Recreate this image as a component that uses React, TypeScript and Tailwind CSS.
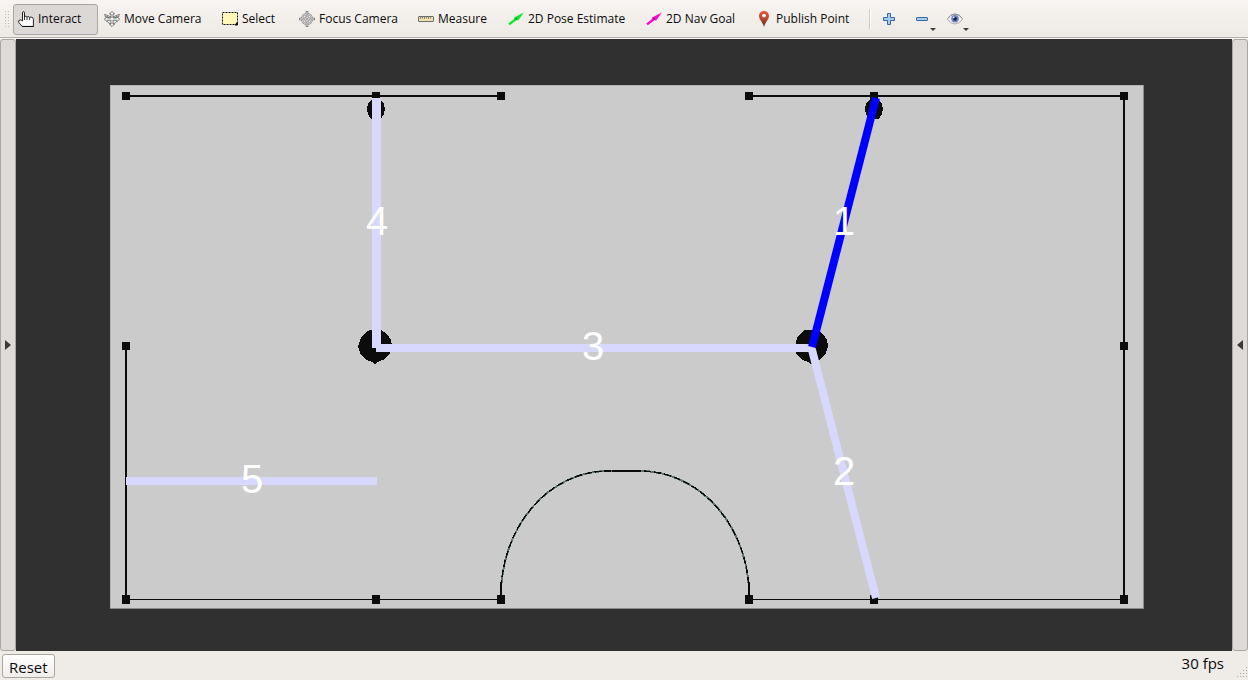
import { useState } from 'react';
import type { ReactNode } from 'react';

function HandIcon() {
  return (
    <svg width="16" height="16" viewBox="0 0 16 16" aria-hidden="true">
      <path
        d="M4.5 10V1.8Q4.5.6 5.5.6T6.5 1.8V6.2Q6.7 5.2 7.7 5.2T9 6.4Q9.2 5.5 10.2 5.5T11.6 6.8Q11.8 6 12.6 6Q15.4 6 15.4 8.4V15.4H4.2L.6 11.2Q.3 9.2 2 8.9Q3.2 8.8 4.5 10Z"
        fill="#fff" stroke="#222" strokeWidth="1"
      />
      <path d="M6.5 6v3M9 6.5v2.500M11.6 6.8v2.200" stroke="#333" fill="none" />
      <path d="M4.2 15.5h11.4" stroke="#111" />
    </svg>
  );
}

function MoveIcon() {
  return (
    <svg width="16" height="16" viewBox="0 0 16 16" aria-hidden="true">
      <g fill="#f4f4f0" stroke="#5c5c5c" strokeWidth="0.8" strokeLinejoin="round">
        <path d="M.6 3.400 3 4.200Q8 7.600 13 4.200L15.400 3.400 14.400 6.400 13.400 5.600Q8 9 2.600 5.600L1.600 6.400Z" />
        <path d="M8 .4 10.600 3H9V7H12.600V5.600L15.700 8.200 12.600 10.800V9.200H9V13H10.600L8 15.600 5.400 13H7V9.200H3.400V10.800L.3 8.200 3.400 5.600V7H7V3H5.400Z" />
        <path d="M3.600 10.800Q5 12.600 7 12.800M12.400 10.800Q11 12.600 9 12.800" fill="none" />
      </g>
    </svg>
  );
}

function SelectIcon() {
  return (
    <svg width="16" height="16" viewBox="0 0 16 16" aria-hidden="true">
      <rect x="0.5" y="1.5" width="15" height="12" fill="#fff8b8" stroke="#111" strokeDasharray="2 1" />
      <path d="M15.5 11v3H13Z" fill="#111" stroke="#111" />
    </svg>
  );
}

function FocusIcon() {
  return (
    <svg width="16" height="16" viewBox="0 0 16 16" aria-hidden="true">
      <g fill="none" stroke="#777">
        <circle cx="8" cy="8" r="5" strokeWidth="2" />
        <circle cx="8" cy="8" r="5" stroke="#f2f2f2" strokeWidth="0.9" />
        <circle cx="8" cy="8" r="2.500" strokeWidth="0.8" />
        <path d="M8 0v6M8 10v6M0 8h6M10 8h6" strokeWidth="2.6" />
        <path d="M8 .8v14.400M.8 8h14.400" stroke="#efefef" />
        <path d="M6.500 8h3M8 6.500v3" strokeWidth="0.8" />
      </g>
    </svg>
  );
}

function RulerIcon() {
  return (
    <svg width="16" height="16" viewBox="0 0 16 16" aria-hidden="true">
      <rect x="0.5" y="5.5" width="15" height="5" rx="0.5" fill="#eee1ad" stroke="#6c6c6c" />
      <path d="M2.500 6v2M4.500 6v1.500M6.500 6v2M8.500 6v1.500M10.500 6v2M12.500 6v1.500" stroke="#666" strokeWidth="0.8" />
    </svg>
  );
}

function ArrowIcon({ color, shade }: { color: string; shade: string }) {
  return (
    <svg width="16" height="16" viewBox="0 0 16 16" aria-hidden="true">
      <path d="M.2 12.600 6.400 7.800 5.600 6.800 15.800 1.600 10 9.800 8.800 9 1.800 14.200Z" fill={color} />
      <path d="M6.400 7.800 8.800 9 9.400 6.600Z" fill={shade} />
    </svg>
  );
}

function PinIcon() {
  return (
    <svg width="16" height="16" viewBox="0 0 16 16" aria-hidden="true">
      <defs>
        <linearGradient id="pin" x1="0" y1="0" x2="0" y2="1">
          <stop offset="0" stopColor="#ee5538" />
          <stop offset="0.5" stopColor="#b9442f" />
          <stop offset="1" stopColor="#49301c" />
        </linearGradient>
      </defs>
      <path d="M8 0C4.900 0 3 2.200 3 5c0 3.600 3.800 6 5 11 1.200-5 5-7.400 5-11 0-2.800-1.900-5-5-5Z" fill="url(#pin)" />
      <circle cx="8" cy="4.600" r="1.900" fill="#fff" />
    </svg>
  );
}

function PlusIcon() {
  return (
    <svg width="16" height="16" viewBox="0 0 16 16" aria-hidden="true">
      <path d="M6.500 2.500h3v4h4v3h-4v4h-3v-4h-4v-3h4Z" fill="#a9cbed" stroke="#3467a4" strokeLinejoin="round" />
    </svg>
  );
}

function MinusIcon() {
  return (
    <svg width="16" height="16" viewBox="0 0 16 16" aria-hidden="true">
      <rect x="2.500" y="6.500" width="11" height="3" rx="0.5" fill="#a9cbed" stroke="#3467a4" />
    </svg>
  );
}

function EyeIcon() {
  return (
    <svg width="16" height="16" viewBox="0 0 16 16" aria-hidden="true">
      <path d="M.4 8Q3.500 3 8 3t7.600 5Q12.500 13 8 13T.4 8Z" fill="#f2f2f2" stroke="#aaa" />
      <path d="M.8 7.400Q3.700 3 8 3t7.200 4.400" fill="none" stroke="#8c8c8c" />
      <circle cx="8" cy="7.800" r="3.800" fill="#6d83c8" />
      <circle cx="8" cy="7.800" r="1.900" fill="#151c44" />
      <circle cx="6.700" cy="6.400" r="0.9" fill="#dfe6ff" />
    </svg>
  );
}

function Caret() {
  return (
    <svg className="absolute right-0 bottom-0" width="6" height="3" viewBox="0 0 6 3" aria-hidden="true">
      <path d="M0 0h6L3 3Z" fill="#3c3c3c" />
    </svg>
  );
}

const tools: { name: string; width: string; icon: ReactNode }[] = [
  { name: 'Interact', width: 'w-[85px]', icon: <HandIcon /> },
  { name: 'Move Camera', width: 'w-[117px]', icon: <MoveIcon /> },
  { name: 'Select', width: 'w-[76px]', icon: <SelectIcon /> },
  { name: 'Focus Camera', width: 'w-[118px]', icon: <FocusIcon /> },
  { name: 'Measure', width: 'w-[89px]', icon: <RulerIcon /> },
  { name: '2D Pose Estimate', width: 'w-[137px]', icon: <ArrowIcon color="#0bea2c" shade="#087a18" /> },
  { name: '2D Nav Goal', width: 'w-[109px]', icon: <ArrowIcon color="#f80bd0" shade="#8d0878" /> },
  { name: 'Publish Point', width: 'w-[114px]', icon: <PinIcon /> },
];

function Toolbar() {
  const [active, setActive] = useState('Interact');
  return (
    <header className="flex h-[39px] shrink-0 items-center border-b border-[#f5f3f0] bg-gradient-to-b from-[#f7f4f1] to-[#edeae5]">
      <div className="flex h-full w-full items-center border-b border-[#b4b0ac] pt-px pl-1">
        <svg className="mr-1 shrink-0" width="5" height="18" viewBox="0 0 5 18" aria-hidden="true">
          <path d="M1.500 1v16M4.500 1v16" stroke="#bdb9b5" strokeDasharray="1 2" />
        </svg>
        <div className="flex gap-px">
          {tools.map((tool) => (
            <button
              key={tool.name}
              type="button"
              aria-pressed={active === tool.name}
              onClick={() => setActive(tool.name)}
              className={`flex h-[31px] shrink-0 items-center gap-1 rounded-[3px] border pl-1 text-xs whitespace-nowrap text-[#0c0c0c] ${tool.width} ${
                active === tool.name ? 'border-[#aaa6a2] bg-[#dcd8d5]' : 'border-transparent'
              }`}
            >
              <span className="shrink-0">{tool.icon}</span>
              {tool.name}
            </button>
          ))}
        </div>
        <div className="ml-1 h-5 w-0.5 shrink-0 border-l border-r border-l-[#cfccc8] border-r-white" />
        <div className="ml-2.5 flex shrink-0 items-center gap-[17px]">
          <button type="button" aria-label="Add tool"><PlusIcon /></button>
          <button type="button" aria-label="Remove tool" className="relative -mr-1.5 w-[22px] py-1">
            <MinusIcon />
            <Caret />
          </button>
          <button type="button" aria-label="Tool visibility" className="relative w-[22px] py-1">
            <EyeIcon />
            <Caret />
          </button>
        </div>
      </div>
    </header>
  );
}

function SideHandle({ label, points }: { label: string; points: string }) {
  return (
    <button
      type="button"
      aria-label={label}
      className="flex w-4 shrink-0 items-center justify-center rounded-[3px] border border-[#aaa6a2] bg-[#dedad7]"
    >
      <svg width="6" height="10" viewBox="0 0 6 10" aria-hidden="true">
        <polygon points={points} fill="#3a3a3a" />
      </svg>
    </button>
  );
}

const corners = [
  [126, 96], [376, 96], [501, 96], [749, 96], [874, 96], [1124, 96],
  [126, 346], [1124, 346],
  [126, 599], [376, 599], [501, 599], [749, 599], [874, 599], [1124, 599],
];

const labels = [
  { text: '1', x: 844, y: 235 },
  { text: '2', x: 844, y: 485 },
  { text: '3', x: 593, y: 360 },
  { text: '4', x: 377, y: 235 },
  { text: '5', x: 252, y: 493 },
];

const arch = 'M501 597V595A107 124 0 0 1 608 471H640A109 124 0 0 1 749 595V597';

function MapView() {
  return (
    <svg className="min-w-0 flex-1 bg-[#303030]" viewBox="16 39 1216 612" role="img" aria-label="Map">
      <rect x="110" y="85" width="1034" height="524" fill="#8c8c8c" />
      <rect x="110" y="85" width="1033" height="523" fill="#b4b4b4" />
      <rect x="111" y="86" width="1032" height="522" fill="#cbcbcb" />
      <g shapeRendering="crispEdges">
        <g stroke="#0c0c0c" strokeWidth="2" fill="none">
          <path d="M126 96H501M749 96H1124V600M126 346V600" />
          <path d="M126 599.500H501M749 599.500H1124" strokeWidth="1" />
          <path d={arch} stroke="#607470" strokeWidth="2" />
          <path d={arch} strokeWidth="1.4" strokeDasharray="7 3" />
          <path d="M501 599V582M612 471H636M749 599V582" />
        </g>
        <g fill="#0c0c0c">
          {corners.map(([x, y]) => (
            <rect key={`${x}-${y}`} x={x - 4} y={y - 4} width="8" height={y > 500 ? 9 : 8} />
          ))}
          <path d="M371 100H381L384 104 385 109 384 114 381 119H371L368 114 367 109 368 104Z" />
          <path d="M869 100H879L882 104 883 109 882 114 879 119H869L866 114 865 109 866 104Z" />
          <path d="M370 330H381L387 334 391 340 392 346 390 353 385 359 378 362 375 364 372 362 365 359 360 353 358 346 361 338 365 333Z" />
          <path d="M805 330H817L823 334 827 340 828 346 826 353 821 359 814 362 811 364 808 362 801 359 796 353 795 346 797 338 801 333Z" />
        </g>
      </g>
      <g stroke="#d8d8ff" strokeWidth="8">
        <path d="M376.500 98V348" strokeWidth="9" />
        <path d="M376 348H811" />
        <path d="M126 481H377" />
        <path d="M811 346 876 598" />
        <path d="M876 98 812 347" stroke="#0000ff" />
      </g>
      <g fill="#fff" textAnchor="middle" fontSize="40" fontFamily="Liberation Sans, Arial, sans-serif">
        {labels.map((label) => (
          <text key={label.text} x={label.x} y={label.y}>{label.text}</text>
        ))}
      </g>
    </svg>
  );
}

export default function App() {
  return (
    <div className="flex h-screen flex-col overflow-hidden bg-[#efebe7] font-['Open_Sans',sans-serif] text-[#0c0c0c]">
      <Toolbar />
      <main className="flex min-h-0 flex-1">
        <SideHandle label="Show left panel" points="0,0 6,5 0,10" />
        <MapView />
        <SideHandle label="Show right panel" points="6,0 0,5 6,10" />
      </main>
      <footer className="flex h-[29px] shrink-0 items-center justify-between pl-0.5">
        <button
          type="button"
          className="h-6 rounded-[3px] border border-[#aaa6a2] bg-gradient-to-b from-white to-[#f0eeeb] px-1.5 text-[15px] leading-6"
        >
          Reset
        </button>
        <div className="flex h-full items-end gap-2.5">
          <span className="self-center pb-1.5 text-[15px] leading-5">30 fps</span>
          <svg className="mb-0.5" width="14" height="12" viewBox="0 0 14 12" aria-hidden="true">
            <path
              d="M12 1h1v1h-1zM9 4h1v1h-1zM12 4h1v1h-1zM6 7h1v1h-1zM9 7h1v1h-1zM12 7h1v1h-1zM3 10h1v1h-1zM6 10h1v1h-1zM9 10h1v1h-1zM12 10h1v1h-1z"
              fill="#aaa6a2"
            />
          </svg>
        </div>
      </footer>
    </div>
  );
}
